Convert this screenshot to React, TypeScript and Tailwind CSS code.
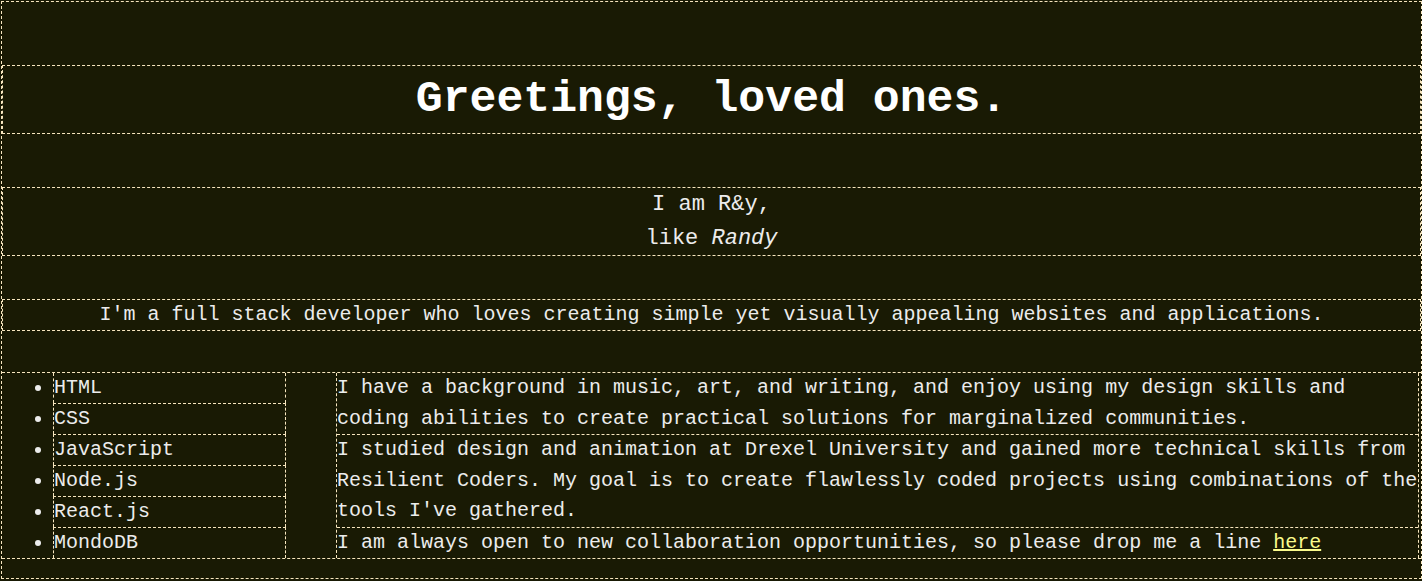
import React from "react";

const skills = ["HTML", "CSS", "JavaScript", "Node.js", "React.js", "MondoDB"];

const dash = "border-dashed border-[#f7e6bf]";

export default function App() {
    return (
        <div className="min-h-[581px] bg-[#191a04] pt-px pl-px font-['Liberation_Mono','Courier_New',monospace] text-[#ececec]">
            <div className={`flex h-[578px] w-[1421px] flex-col border ${dash}`}>
                {/* heading */}
                <h1
                    className={`mt-[63px] border ${dash} text-center text-[44.8px] font-bold leading-[67px] text-white`}
                >
                    Greetings, loved ones.
                </h1>

                <p className={`mt-[53px] border ${dash} text-center text-[22px] leading-[33.5px]`}>
                    I am R&amp;y,
                    <br />
                    like <em>Randy</em>
                </p>

                <p className={`mt-[43px] border ${dash} text-center text-[20px] leading-[30px]`}>
                    I'm a full stack developer who loves creating simple yet visually appealing
                    websites and applications.
                </p>

                {/* about section */}
                <section className={`mt-[41px] flex border-y ${dash} text-[20px]`}>
                    <ul className="w-[284px] shrink-0 list-disc pl-[51px]">
                        {skills.map((s, i) => (
                            <li
                                key={s}
                                className={`h-[30px] border-x ${dash} leading-[30px] ${i > 0 ? "box-content border-t" : ""}`}
                            >
                                {s}
                            </li>
                        ))}
                    </ul>

                    <div className={`ml-[50px] mr-[2px] flex flex-1 flex-col border-x ${dash} leading-[30.5px]`}>
                        <p>
                            I have a background in music, art, and writing, and enjoy using my design
                            skills and coding abilities to create practical solutions for marginalized
                            communities.
                        </p>
                        <p className={`border-t ${dash}`}>
                            I studied design and animation at Drexel University and gained more technical
                            skills from Resilient Coders. My goal is to create flawlessly coded projects
                            using combinations of the tools I've gathered.
                        </p>
                        <p className={`border-t ${dash}`}>
                            I am always open to new collaboration opportunities, so please drop me a line{" "}
                            <a href="#" className="text-[#fbfb8c] underline">
                                here
                            </a>
                        </p>
                    </div>
                </section>
            </div>
        </div>
    );
}
